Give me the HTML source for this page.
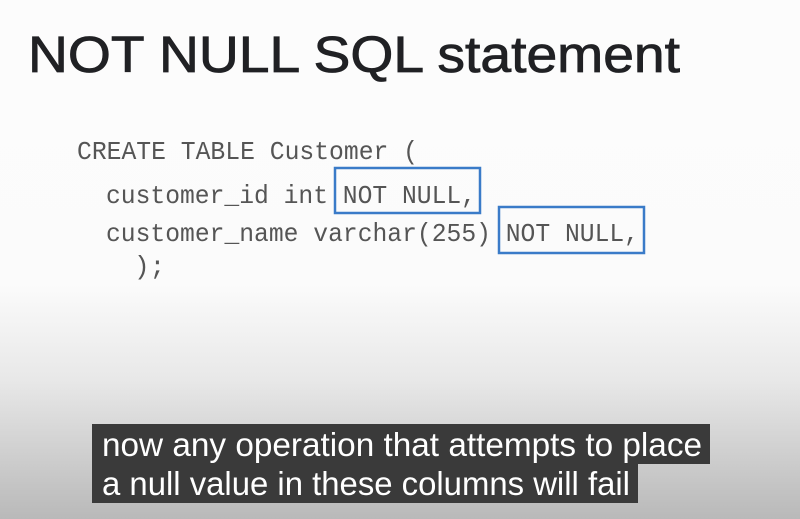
<!DOCTYPE html>
<html><head><style>
html,body{margin:0;padding:0;}
body{width:800px;height:519px;overflow:hidden;position:relative;background:linear-gradient(to bottom,#fcfcfc 0px,#fbfbfb 285px,#e8e8e8 380px,#b9b9b9 519px);}
svg{position:absolute;left:0;top:0;}
.cap{position:absolute;background:#3a3a3a;left:92px;}
</style></head><body>
<div class="cap" style="top:424px;width:618px;height:40px;"></div>
<div class="cap" style="top:464px;width:546px;height:39px;"></div>
<svg width="800" height="519" xmlns="http://www.w3.org/2000/svg">
<text x="28" y="72" font-family="Liberation Sans, sans-serif" font-size="51" fill="#202124" stroke="#202124" stroke-width="0.8" textLength="652" lengthAdjust="spacingAndGlyphs">NOT NULL SQL statement</text>
<g font-family="Liberation Mono, monospace" font-size="26" fill="#555">
<text x="77" y="159" textLength="341" lengthAdjust="spacingAndGlyphs">CREATE TABLE Customer (</text>
<text x="106" y="203" textLength="370" lengthAdjust="spacingAndGlyphs">customer_id int NOT NULL,</text>
<text x="106" y="241" textLength="533" lengthAdjust="spacingAndGlyphs">customer_name varchar(255) NOT NULL,</text>
<text x="134" y="274">);</text>
</g>
<rect x="335" y="168" width="145" height="45" fill="none" stroke="#3a7bc8" stroke-width="2.5"/>
<rect x="499" y="207" width="145" height="46" fill="none" stroke="#3a7bc8" stroke-width="2.5"/>
<g font-family="Liberation Sans, sans-serif" font-size="33" fill="#fff">
<text x="102" y="456" textLength="600" lengthAdjust="spacingAndGlyphs">now any operation that attempts to place</text>
<text x="102" y="495" textLength="528" lengthAdjust="spacingAndGlyphs">a null value in these columns will fail</text>
</g>
</svg>
</body></html>
